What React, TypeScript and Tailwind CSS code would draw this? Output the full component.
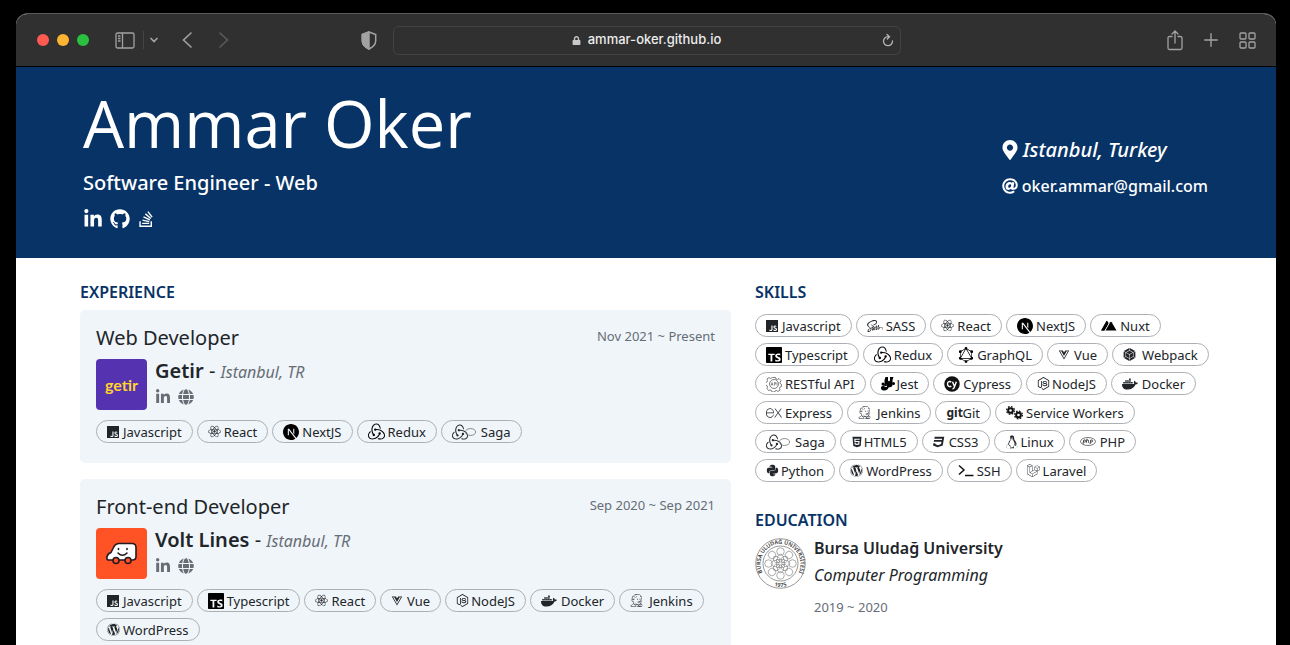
import type { ReactNode } from 'react';
import {
  FaAt,
  FaCss3,
  FaDocker,
  FaGithub,
  FaGlobe,
  FaHtml5,
  FaJenkins,
  FaLaravel,
  FaLinkedinIn,
  FaLock,
  FaMapMarkerAlt,
  FaNodeJs,
  FaPython,
  FaReact,
  FaSass,
  FaStackOverflow,
  FaVuejs,
  FaWordpress,
} from 'react-icons/fa';
import { DiLinux } from 'react-icons/di';
import { SiExpress, SiGraphql, SiJavascript, SiNextdotjs, SiRedux, SiTypescript, SiWebpack } from 'react-icons/si';

function NuxtIcon() {
  return (
    <svg viewBox="0 0 32 22" className="h-[11px] w-4" fill="#000" aria-hidden="true">
      <path d="M0 21 10.500 2.500Q11.500.8 13 2.400L15 6 7.500 19 6.800 21Z" />
      <path d="M9 21 18.500 4.500Q19.800 2.500 21.300 4.500L31 21Z" />
      <path d="M1 21 11 3l4 4-8 14Z" />
    </svg>
  );
}

function RestIcon() {
  return (
    <svg viewBox="0 0 32 32" className="size-4" fill="none" stroke="#555" strokeWidth="1.500" aria-hidden="true">
      <path d="M13 3h6l1 3 3 1 3-2 4 4-2 4 1 3 2 1v4l-3 1-1 3 1 3-4 3-3-2-3 1-1 2h-5l-1-3-3-1-3 1-3-4 1-3-1-3-3-1v-5l3-1 1-3-1-3 4-3 3 2 2-1z" />
      <circle cx="16" cy="16" r="9" />
      <path d="m10 19 2-6 2 6m-3.500-2h3M17 19v-6h2.500v3H17m5-3v6" strokeWidth="1.200" />
    </svg>
  );
}

function JestIcon() {
  return (
    <svg viewBox="0 0 28 28" className="size-[14px]" fill="#000" aria-hidden="true">
      <path d="M9 0h16l-2 6v10q0 3-3 4l-5 1q-2 6-8 6-6 1-7-4-1-4 3-5 4-1 4-5V6z" />
      <path d="M14 0v7l2 2 2-2V0M8 14h4v6H7" fill="#fff" />
      <circle cx="4" cy="14" r="3" />
      <circle cx="9.500" cy="16" r="2.500" />
      <circle cx="25" cy="13" r="3" />
    </svg>
  );
}

function CypressIcon() {
  return (
    <svg viewBox="0 0 32 32" className="size-4" aria-hidden="true">
      <circle cx="16" cy="16" r="15.500" fill="#111" />
      <path
        d="M14.500 12.300C12 9.800 7 11 7 16s5 6.500 7.500 3.800M17 11.500l3.700 9m4-9-4.500 12c-.6 1.700-1.500 2-3.200 1.900"
        fill="none"
        stroke="#fff"
        strokeWidth="2.800"
      />
    </svg>
  );
}

function GearsIcon() {
  return (
    <svg viewBox="0 0 34 28" className="h-[14px] w-[17px]" fill="none" stroke="#111" aria-hidden="true">
      <circle cx="9" cy="9" r="4.700" strokeWidth="4" />
      <circle cx="9" cy="9" r="7.700" strokeWidth="2.600" strokeDasharray="3.300 2.750" />
      <circle cx="25" cy="18" r="4.700" strokeWidth="4" />
      <circle cx="25" cy="18" r="7.700" strokeWidth="2.600" strokeDasharray="3.300 2.750" />
    </svg>
  );
}

function SagaIcon() {
  return (
    <span className="flex items-center">
      <SiRedux className="size-4" />
      <svg viewBox="0 0 20 14" className="-ml-1 h-2 w-[13px]" fill="none" stroke="#777" strokeWidth="1.500" aria-hidden="true">
        <ellipse cx="10" cy="7" rx="9" ry="6" />
      </svg>
    </span>
  );
}

function PhpIcon() {
  return (
    <svg viewBox="0 0 32 18" className="h-[9px] w-4" fill="none" stroke="#333" aria-hidden="true">
      <ellipse cx="16" cy="9" rx="15" ry="8" strokeWidth="1.300" />
      <path d="m6 14 1.500-8H10c2 0 2 4-1 4H7m5.500 1.500L14 3.500m-.5 3c4-1.500 4 0 3.200 5M20 14l1.500-8H24c2 0 2 4-1 4h-2" strokeWidth="1.800" />
    </svg>
  );
}

function PromptIcon() {
  return (
    <svg viewBox="0 0 32 26" className="h-[13px] w-4" fill="none" stroke="#111" strokeWidth="3" aria-hidden="true">
      <path d="m2 3 10 9L2 21M14 23h17" />
    </svg>
  );
}

const icons: Record<string, { icon: ReactNode; slot: string }> = {
  Javascript: { icon: <SiJavascript className="size-3" />, slot: 'w-4' },
  SASS: { icon: <FaSass className="size-4" />, slot: 'w-[19px]' },
  React: { icon: <FaReact className="size-[13px]" />, slot: 'w-4' },
  NextJS: { icon: <SiNextdotjs className="size-4 text-black" />, slot: 'w-[19px]' },
  Nuxt: { icon: <NuxtIcon />, slot: 'w-[19px]' },
  Typescript: { icon: <SiTypescript className="size-4 text-black" />, slot: 'w-[19px]' },
  Redux: { icon: <SiRedux className="size-[17px] text-black" />, slot: 'w-5' },
  GraphQL: { icon: <SiGraphql className="size-4 text-black" />, slot: 'w-[19px]' },
  Vue: { icon: <FaVuejs className="size-3" />, slot: 'w-4' },
  Webpack: { icon: <SiWebpack className="size-[13px]" />, slot: 'w-[19px]' },
  'RESTful API': { icon: <RestIcon />, slot: 'w-[19px]' },
  Jest: { icon: <JestIcon />, slot: 'w-4' },
  Cypress: { icon: <CypressIcon />, slot: 'w-[19px]' },
  NodeJS: { icon: <FaNodeJs className="size-[13px]" />, slot: 'w-[15px]' },
  Docker: { icon: <FaDocker className="size-4" />, slot: 'w-5' },
  Express: { icon: <SiExpress className="size-4" />, slot: 'w-[19px]' },
  Jenkins: { icon: <FaJenkins className="size-[13px]" />, slot: 'w-[19px]' },
  Git: { icon: <span className="font-['Noto_Sans',sans-serif] text-xs font-bold">git</span>, slot: 'w-4' },
  'Service Workers': { icon: <GearsIcon />, slot: 'w-5' },
  Saga: { icon: <SagaIcon />, slot: 'w-[29px]' },
  HTML5: { icon: <FaHtml5 className="size-3" />, slot: 'w-[13px]' },
  CSS3: { icon: <FaCss3 className="size-3" />, slot: 'w-4' },
  Linux: { icon: <DiLinux className="size-[14px]" />, slot: 'w-4' },
  PHP: { icon: <PhpIcon />, slot: 'w-5' },
  Python: { icon: <FaPython className="size-[13px]" />, slot: 'w-[15px]' },
  WordPress: { icon: <FaWordpress className="size-[13px]" />, slot: 'w-4' },
  SSH: { icon: <PromptIcon />, slot: 'w-[19px]' },
  Laravel: { icon: <FaLaravel className="size-[13px]" />, slot: 'w-4' },
};

function TagList({ names }: { names: string[] }) {
  return (
    <ul className="flex flex-wrap gap-x-1 gap-y-[6px]">
      {names.map((name) => (
        <li
          key={name}
          className="flex h-[23px] items-center rounded-full border border-[#acafb3] px-[10px] text-[13px] leading-5 whitespace-nowrap"
        >
          <span className={`flex shrink-0 items-center ${icons[name].slot}`}>{icons[name].icon}</span>
          {name}
        </li>
      ))}
    </ul>
  );
}

function GetirLogo() {
  return (
    <div className="grid size-[51px] place-items-center rounded bg-[#5533b0] font-['Lato',sans-serif] text-base leading-5 font-bold text-[#ffd22e]">
      getir
    </div>
  );
}

function VoltLogo() {
  return (
    <div className="grid size-[51px] place-items-center rounded bg-[#ff5326]">
      <svg viewBox="0 0 62 46" className="h-[23px] w-[31px]" stroke="#251a22" strokeWidth="3.200" strokeLinejoin="round" strokeLinecap="round" aria-hidden="true">
        <path d="M4 36q-3-1-2-6 1-7 8-9l5-10q3-7 10-8h27q8 0 8 8v18q0 7-7 7z" fill="#fff" />
        <circle cx="20" cy="37" r="6" fill="#ff5326" />
        <circle cx="44" cy="37" r="6" fill="#ff5326" />
        <path d="M24 22q9 9 18 0" fill="none" />
        <path d="M25 13v2m17-2v2" />
      </svg>
    </div>
  );
}

function UniversitySeal() {
  const petals = [0, 45, 90, 135, 180, 225, 270, 315];
  return (
    <svg viewBox="0 0 102 102" className="size-[51px] shrink-0" fill="none" stroke="#777" aria-hidden="true">
      <defs>
        <path id="seal-top" d="M16.500 72A40 40 0 1 1 85.500 72" />
        <path id="seal-bottom" d="M20 86A47 47 0 0 0 82 86" />
      </defs>
      <circle cx="51" cy="51" r="49.500" strokeWidth="1.500" />
      <circle cx="51" cy="51" r="35" strokeWidth="1.500" />
      {petals.map((angle) => (
        <g key={angle} transform={`rotate(${angle} 51 51)`} strokeWidth="1.200">
          <circle cx="51" cy="27" r="7.500" />
          <path d="m45 37 6-5 6 5v6l-6 5-6-5z" />
        </g>
      ))}
      <rect x="43" y="43" width="16" height="16" />
      <g fill="#333" stroke="none" fontFamily="Noto Sans, sans-serif" fontWeight="600" fontSize="11">
        <text textAnchor="middle">
          <textPath href="#seal-top" startOffset="50%">BURSA ULUDAĞ ÜNİVERSİTESİ</textPath>
        </text>
        <text textAnchor="middle">
          <textPath href="#seal-bottom" startOffset="50%">1975</textPath>
        </text>
      </g>
    </svg>
  );
}

type JobProps = {
  title: string;
  dates: string;
  company: string;
  place: string;
  logo: ReactNode;
  tags: string[];
};

function Job({ title, dates, company, place, logo, tags }: JobProps) {
  return (
    <article className="rounded-[5px] bg-[#f0f5fa] px-4 pt-[14px] pb-5">
      <div className="flex justify-between">
        <h3 className="text-xl leading-7">{title}</h3>
        <span className="text-[13px] leading-6 text-[#666d75]">{dates}</span>
      </div>
      <div className="mt-[7px] flex gap-2">
        {logo}
        <div>
          <div className="text-xl leading-6">
            <span className="font-semibold">{company}</span> -{' '}
            <span className="text-base text-[#666d75] italic">{place}</span>
          </div>
          <div className="mt-[5px] flex items-center gap-[7px] text-[#666d75]">
            <a href="#linkedin" aria-label={`${company} on LinkedIn`}>
              <FaLinkedinIn className="size-4" />
            </a>
            <a href="#website" aria-label={`${company} website`}>
              <FaGlobe className="size-4" />
            </a>
          </div>
        </div>
      </div>
      <div className="mt-[10px]">
        <TagList names={tags} />
      </div>
    </article>
  );
}

function Toolbar() {
  return (
    <div className="flex h-[53px] items-center border-b border-black bg-[#303030] pr-5 pl-[21px] text-[#a2a2a2]">
      <div className="flex flex-1 items-center">
        <div className="flex gap-2">
          <span className="size-3 rounded-full bg-[#ff5a52]" />
          <span className="size-3 rounded-full bg-[#fdb432]" />
          <span className="size-3 rounded-full bg-[#28c23f]" />
        </div>
        <button aria-label="Sidebar" className="ml-[26px]">
          <svg viewBox="0 0 20 17" className="h-[17px] w-5" fill="none" stroke="currentColor" strokeWidth="1.300">
            <rect x="1" y="1" width="18" height="15" rx="1.500" />
            <path d="M7.500 1v15M3 4h2.500M3 6.500h2.500M3 9h2.500" />
          </svg>
        </button>
        <span className="ml-2 h-[18px] w-px bg-[#444]" />
        <button aria-label="Tab groups" className="ml-[6px]">
          <svg viewBox="0 0 8 6" className="h-[6px] w-2" fill="none" stroke="currentColor" strokeWidth="1.700" strokeLinecap="round">
            <path d="m1 1.500 3 3 3-3" />
          </svg>
        </button>
        <button aria-label="Back" className="ml-6">
          <svg viewBox="0 0 10 16" className="h-4 w-[10px]" fill="none" stroke="currentColor" strokeWidth="1.600" strokeLinecap="round">
            <path d="M9 1 1.500 8 9 15" />
          </svg>
        </button>
        <button aria-label="Forward" className="ml-[27px] text-[#5a5a5a]">
          <svg viewBox="0 0 10 16" className="h-4 w-[10px]" fill="none" stroke="currentColor" strokeWidth="1.600" strokeLinecap="round">
            <path d="M1 1 8.500 8 1 15" />
          </svg>
        </button>
        <button aria-label="Privacy report" className="mr-4 ml-auto">
          <svg viewBox="0 0 16 19" className="h-[19px] w-4" fill="none" stroke="currentColor" strokeWidth="1.500" strokeLinejoin="round">
            <path d="M8 1 14.700 3.500V10Q14.500 15 8 18 1.500 15 1.300 10V3.500Z" />
            <path d="M8 1 1.300 3.500V10Q1.500 15 8 18Z" fill="currentColor" />
          </svg>
        </button>
      </div>
      <div className="flex h-[29px] w-[508px] items-center rounded-md border border-[#434343] px-[6px] font-['Inter',sans-serif] text-[13px] font-medium text-[#ececec]">
        <span className="flex flex-1 items-center justify-center gap-[7px] pl-3">
          <FaLock className="size-[9px] text-[#c8c8c8]" />
          ammar-oker.github.io
        </span>
        <button aria-label="Reload" className="text-[#b4b4b4]">
          <svg viewBox="0 0 12 14" className="h-[14px] w-3" fill="none" stroke="currentColor" strokeWidth="1.300" strokeLinecap="round">
            <path d="M10.500 8A4.500 4.500 0 1 1 6 3.700h1M5 1.500l2.500 2.200L5.300 6" />
          </svg>
        </button>
      </div>
      <div className="flex flex-1 items-center justify-end gap-[21px]">
        <button aria-label="Share">
          <svg viewBox="0 0 16 21" className="h-[21px] w-4" fill="none" stroke="currentColor" strokeWidth="1.300" strokeLinecap="round">
            <path d="M5 6.500H2.500Q1 6.500 1 8v10q0 1.500 1.500 1.500h11Q15 19.500 15 18V8q0-1.500-1.500-1.500H11M8 13V1.500M5 4l3-3 3 3" />
          </svg>
        </button>
        <button aria-label="New tab">
          <svg viewBox="0 0 14 14" className="size-[14px]" stroke="currentColor" strokeWidth="1.400" strokeLinecap="round">
            <path d="M7 .7v12.600M.7 7h12.600" />
          </svg>
        </button>
        <button aria-label="Tab overview">
          <svg viewBox="0 0 17 17" className="size-[17px]" fill="none" stroke="currentColor" strokeWidth="1.300">
            <rect x="1" y="1" width="6" height="6" rx="1" />
            <rect x="10" y="1" width="6" height="6" rx="1" />
            <rect x="1" y="10" width="6" height="6" rx="1" />
            <rect x="10" y="10" width="6" height="6" rx="1" />
          </svg>
        </button>
      </div>
    </div>
  );
}

export default function App() {
  return (
    <div className="flex h-screen flex-col overflow-hidden bg-black pt-[13px] pr-[14px] pl-4 font-['Noto_Sans','Open_Sans',sans-serif] text-[#212529]">
      <div className="min-h-0 flex-1 overflow-hidden rounded-t-xl border-t border-[#5a5a5a] bg-white">
        <Toolbar />
        <header className="flex items-center justify-between bg-[#083366] pt-3 pr-[68px] pb-[29px] pl-[67px] text-white">
          <div>
            <h1 className="font-['Open_Sans','Noto_Sans',sans-serif] text-[65px] leading-[88px]">Ammar Oker</h1>
            <p className="mt-0.5 text-xl leading-7 font-medium">Software Engineer - Web</p>
            <div className="mt-3 flex items-center gap-[7px]">
              <a href="#linkedin" aria-label="LinkedIn">
                <FaLinkedinIn className="size-5" />
              </a>
              <a href="#github" aria-label="GitHub">
                <FaGithub className="size-5" />
              </a>
              <a href="#stackoverflow" aria-label="Stack Overflow">
                <FaStackOverflow className="size-[18px]" />
              </a>
            </div>
          </div>
          <address className="mt-7 flex flex-col gap-2 not-italic">
            <span className="flex items-center gap-[3px] text-xl leading-7 font-medium italic">
              <FaMapMarkerAlt className="-ml-0.5 size-5" />
              Istanbul, Turkey
            </span>
            <a href="mailto:oker.ammar@gmail.com" className="flex items-center gap-1 text-base leading-7 font-medium">
              <FaAt className="size-4" />
              oker.ammar@gmail.com
            </a>
          </address>
        </header>
        <main className="flex gap-6 pt-[22px] pr-[66px] pl-16">
          <section className="flex-1">
            <h2 className="mb-[6px] text-base leading-6 font-semibold text-[#083366]">EXPERIENCE</h2>
            <div className="flex flex-col gap-4">
              <Job
                title="Web Developer"
                dates="Nov 2021 ~ Present"
                company="Getir"
                place="Istanbul, TR"
                logo={<GetirLogo />}
                tags={['Javascript', 'React', 'NextJS', 'Redux', 'Saga']}
              />
              <Job
                title="Front-end Developer"
                dates="Sep 2020 ~ Sep 2021"
                company="Volt Lines"
                place="Istanbul, TR"
                logo={<VoltLogo />}
                tags={['Javascript', 'Typescript', 'React', 'Vue', 'NodeJS', 'Docker', 'Jenkins', 'WordPress']}
              />
            </div>
          </section>
          <aside className="w-[455px]">
            <h2 className="mb-[10px] text-base leading-6 font-semibold text-[#083366]">SKILLS</h2>
            <div className="flex flex-col gap-[6px]">
              <TagList names={['Javascript', 'SASS', 'React', 'NextJS', 'Nuxt']} />
              <TagList names={['Typescript', 'Redux', 'GraphQL', 'Vue', 'Webpack']} />
              <TagList names={['RESTful API', 'Jest', 'Cypress', 'NodeJS', 'Docker']} />
              <TagList names={['Express', 'Jenkins', 'Git', 'Service Workers']} />
              <TagList names={['Saga', 'HTML5', 'CSS3', 'Linux', 'PHP']} />
              <TagList names={['Python', 'WordPress', 'SSH', 'Laravel']} />
            </div>
            <h2 className="mt-[26px] text-base leading-6 font-semibold text-[#083366]">EDUCATION</h2>
            <div className="mt-[6px] flex gap-2">
              <UniversitySeal />
              <div>
                <h3 className="text-base leading-5 font-semibold">Bursa Uludağ University</h3>
                <p className="mt-[7px] text-base leading-5 italic">Computer Programming</p>
                <p className="mt-3 text-[13px] leading-5 text-[#666d75]">2019 ~ 2020</p>
              </div>
            </div>
          </aside>
        </main>
      </div>
    </div>
  );
}
